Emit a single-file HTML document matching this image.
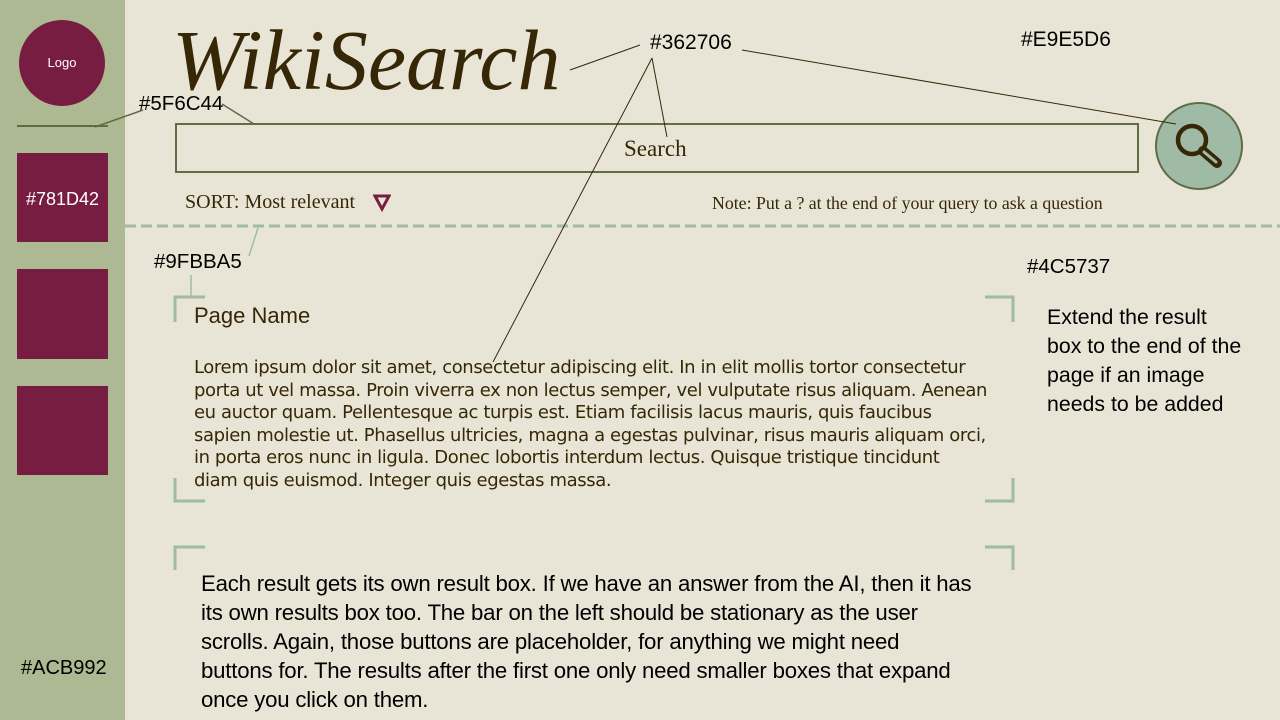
<!DOCTYPE html>
<html><head><style>
body{margin:0;width:1280px;height:720px;background:#E9E5D6;position:relative;overflow:hidden;font-family:"Liberation Sans",sans-serif}
.a{position:absolute;white-space:nowrap}
.sq{position:absolute;left:17px;width:91px;background:#781D42}
</style></head><body>
<div class="a" style="left:0;top:0;width:125px;height:720px;background:#ACB992"></div>
<div class="a" style="left:19px;top:20px;width:86px;height:86px;border-radius:50%;background:#781D42;color:#fff;font-size:13px;line-height:86px;text-align:center">Logo</div>
<div class="a" style="left:17px;top:125px;width:91px;height:2px;background:#5F6C44"></div>
<div class="sq" style="top:153px;height:89px;color:#fff;font-size:18px;line-height:92px;text-align:center">#781D42</div>
<div class="sq" style="top:269px;height:90px"></div>
<div class="sq" style="top:386px;height:89px"></div>
<div class="a" style="left:21px;top:657px;font-size:20px">#ACB992</div>

<div class="a" style="left:172px;top:12px;font-family:'Liberation Serif',serif;font-style:italic;font-size:86px;color:#362706;line-height:96px">WikiSearch</div>
<div class="a" style="left:175px;top:123px;width:960px;height:46px;border:2px solid #5F6C44"></div>
<div class="a" style="left:624px;top:136px;font-family:'Liberation Serif',serif;font-size:23px;color:#362706">Search</div>
<div class="a" style="left:1155px;top:102px;width:88px;height:88px;border-radius:50%;background:#9FBBA5;border:2px solid #5F6C44;box-sizing:border-box"></div>
<svg class="a" style="left:1155px;top:102px" width="88" height="88"><circle cx="37" cy="38" r="14" fill="none" stroke="#362706" stroke-width="4.5"/><line x1="48" y1="49" x2="62" y2="61" stroke="#362706" stroke-width="10" stroke-linecap="round"/><line x1="49" y1="50" x2="61" y2="60" stroke="#9FBBA5" stroke-width="3" stroke-linecap="round"/></svg>

<div class="a" style="left:185px;top:191px;font-family:'Liberation Serif',serif;font-size:20px;color:#362706">SORT: Most relevant</div>
<svg class="a" style="left:373px;top:194px" width="18" height="18"><polygon points="2,2 16,2 9,15" fill="none" stroke="#781D42" stroke-width="3"/></svg>
<div class="a" style="left:712px;top:193px;font-family:'Liberation Serif',serif;font-size:17.8px;color:#362706">Note: Put a ? at the end of your query to ask a question</div>
<svg class="a" style="left:125px;top:222px" width="1155" height="8"><line x1="0" y1="4" x2="1155" y2="4" stroke="#9FBBA5" stroke-width="3" stroke-dasharray="11 5"/></svg>

<div class="a" style="left:650px;top:31px;font-size:21px">#362706</div>
<div class="a" style="left:1021px;top:28px;font-size:21px">#E9E5D6</div>
<div class="a" style="left:139px;top:92px;font-size:20.5px">#5F6C44</div>
<div class="a" style="left:154px;top:250px;font-size:20.5px">#9FBBA5</div>
<div class="a" style="left:1027px;top:255px;font-size:20.5px">#4C5737</div>
<div class="a" style="left:1047px;top:303px;font-size:21.3px;line-height:29px">Extend the result<br>box to the end of the<br>page if an image<br>needs to be added</div>

<svg class="a" style="left:0;top:0" width="1280" height="720" fill="none">
<g stroke="#5F6C44" stroke-width="1.5"><line x1="95" y1="127" x2="143" y2="110"/><line x1="222" y1="104" x2="254" y2="124"/></g>
<g stroke="#362706" stroke-width="1"><line x1="570" y1="70" x2="640" y2="45"/><line x1="652" y1="58" x2="667" y2="137"/><line x1="652" y1="58" x2="493" y2="362"/><line x1="742" y1="50" x2="1176" y2="124"/></g>
<g stroke="#9FBBA5" stroke-width="1.5"><line x1="258" y1="228" x2="249" y2="256"/><line x1="191" y1="275" x2="191" y2="296"/></g>
<g stroke="#9FBBA5" stroke-width="3">
<path d="M175 322V297H205M985 297H1013V322M175 478V501H205M985 501H1013V478"/>
<path d="M175 570V547H205M985 547H1013V570"/></g>
</svg>

<div class="a" style="left:194px;top:303px;font-size:22px;color:#362706">Page Name</div>
<div class="a" style="left:194px;top:357px;font-family:'DejaVu Sans',sans-serif;font-size:18px;line-height:22.6px;color:#362706;letter-spacing:-0.4px">Lorem ipsum dolor sit amet, consectetur adipiscing elit. In in elit mollis tortor consectetur<br>porta ut vel massa. Proin viverra ex non lectus semper, vel vulputate risus aliquam. Aenean<br>eu auctor quam. Pellentesque ac turpis est. Etiam facilisis lacus mauris, quis faucibus<br>sapien molestie ut. Phasellus ultricies, magna a egestas pulvinar, risus mauris aliquam orci,<br>in porta eros nunc in ligula. Donec lobortis interdum lectus. Quisque tristique tincidunt<br>diam quis euismod. Integer quis egestas massa.</div>

<div class="a" style="left:201px;top:569px;font-size:22.2px;line-height:29px;color:#000;letter-spacing:-0.2px">Each result gets its own result box. If we have an answer from the AI, then it has<br>its own results box too. The bar on the left should be stationary as the user<br>scrolls. Again, those buttons are placeholder, for anything we might need<br>buttons for. The results after the first one only need smaller boxes that expand<br>once you click on them.</div>
</body></html>
